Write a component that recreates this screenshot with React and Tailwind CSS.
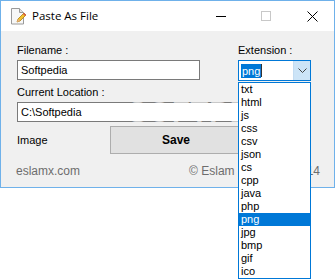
import React from 'react'

const items = ['txt', 'html', 'js', 'css', 'csv', 'json', 'cs', 'cpp', 'java', 'php', 'png', 'jpg', 'bmp', 'gif', 'ico']

function AppIcon() {
  return (
    <svg width="17" height="17" viewBox="0 0 17 17">
      <path d="M2.5 0.5h8l4 4v11.5h-12z" fill="#f7f7f7" stroke="#9a9a9a" />
      <path d="M10.5 0.5v4h4" fill="#e2e2e2" stroke="#9a9a9a" />
      <path d="M8 14l1-3 6-6 2 2-6 6z" fill="#f2c230" stroke="#b07d10" strokeWidth="0.8" />
      <path d="M8 14l1-3 2 2z" fill="#e9b48a" />
      <path d="M14 6l2 2 1-1-2-2z" fill="#d9534f" />
    </svg>
  )
}

export default function App() {
  return (
    <div className="relative w-[336px] h-[279px] bg-white overflow-hidden" style={{ fontFamily: '"Liberation Sans", Arial, sans-serif' }}>
      {/* window */}
      <div className="w-[335px] h-[188px] border border-[#6fb1ea] flex flex-col">
        <div className="h-[30px] bg-white flex items-center shrink-0">
          <div className="ml-[8px] mt-[1px]"><AppIcon /></div>
          <span className="ml-[6px] text-[11.5px] text-black" style={{ fontFamily: '"Segoe UI", "Open Sans", sans-serif' }}>Paste As File</span>
          <div className="ml-auto flex items-center">
            <div className="w-[10px] h-px bg-black mr-[35px]" />
            <div className="w-[10px] h-[10px] border border-[#c8c8c8] mr-[36px]" />
            <svg width="11" height="11" viewBox="0 0 11 11" className="mr-[16px]">
              <path d="M0.5 0.5l10 10M10.5 0.5l-10 10" stroke="#000" strokeWidth="1" />
            </svg>
          </div>
        </div>
        <div className="flex-1 bg-[#f0f0f0] pl-[16px] pt-[13px] text-[11px] leading-[13px] text-black">
          <div className="flex">
            <div className="w-[183px]">
              <div>Filename :</div>
              <div className="mt-[3px] h-[20px] border border-[#7a7a7a] bg-white pl-[3px] flex items-center">Softpedia</div>
            </div>
            <div className="ml-[38px] w-[73px]">
              <div>Extension :</div>
              <div className="mt-[3px] h-[21px] border border-[#0078d7] bg-white flex items-center">
                <span className="ml-[2px] bg-[#0078d7] text-white px-px leading-[14px]">png</span>
                <span className="w-px h-[13px] bg-[#333]" />
                <div className="ml-auto h-full w-[17px] bg-[#cce4f7] border-l border-[#c3dcf2] flex items-center justify-center">
                  <svg width="9" height="5" viewBox="0 0 9 5"><path d="M0.5 0.5l4 4 4-4" fill="none" stroke="#444" /></svg>
                </div>
              </div>
            </div>
          </div>
          <div className="mt-[5px]">Current Location :</div>
          <div className="mt-[3px] w-[294px] h-[20px] border border-[#7a7a7a] bg-white pl-[3px] flex items-center">C:\Softpedia</div>
          <div className="mt-[4px] flex items-center">
            <div className="w-[93px]">Image</div>
            <div className="w-[132px] h-[28px] bg-[#e1e1e1] border border-[#adadad] flex items-center justify-center font-bold text-[12px]">Save</div>
          </div>
          <div className="mt-[11px] flex justify-between pr-[14px] text-[#6d6d6d] text-[12px]">
            <span className="-ml-px">eslamx.com</span>
            <span>© Eslam Hamouda 2014</span>
          </div>
        </div>
      </div>

      {/* watermark */}
      <div className="absolute left-[128px] top-[91px] text-[29px] font-bold tracking-[1px] text-white/60 pointer-events-none select-none">SOFTPEDIA</div>

      {/* dropdown list */}
      <div className="absolute left-[238px] top-[82px] w-[73px] h-[197px] border border-[#0078d7] bg-white text-[11px] leading-[13px] text-black">
        {items.map(it => (
          <div key={it} className={`h-[13px] pl-[2px] ${it === 'png' ? 'bg-[#0078d7] text-white' : ''}`}>{it}</div>
        ))}
      </div>
    </div>
  )
}
